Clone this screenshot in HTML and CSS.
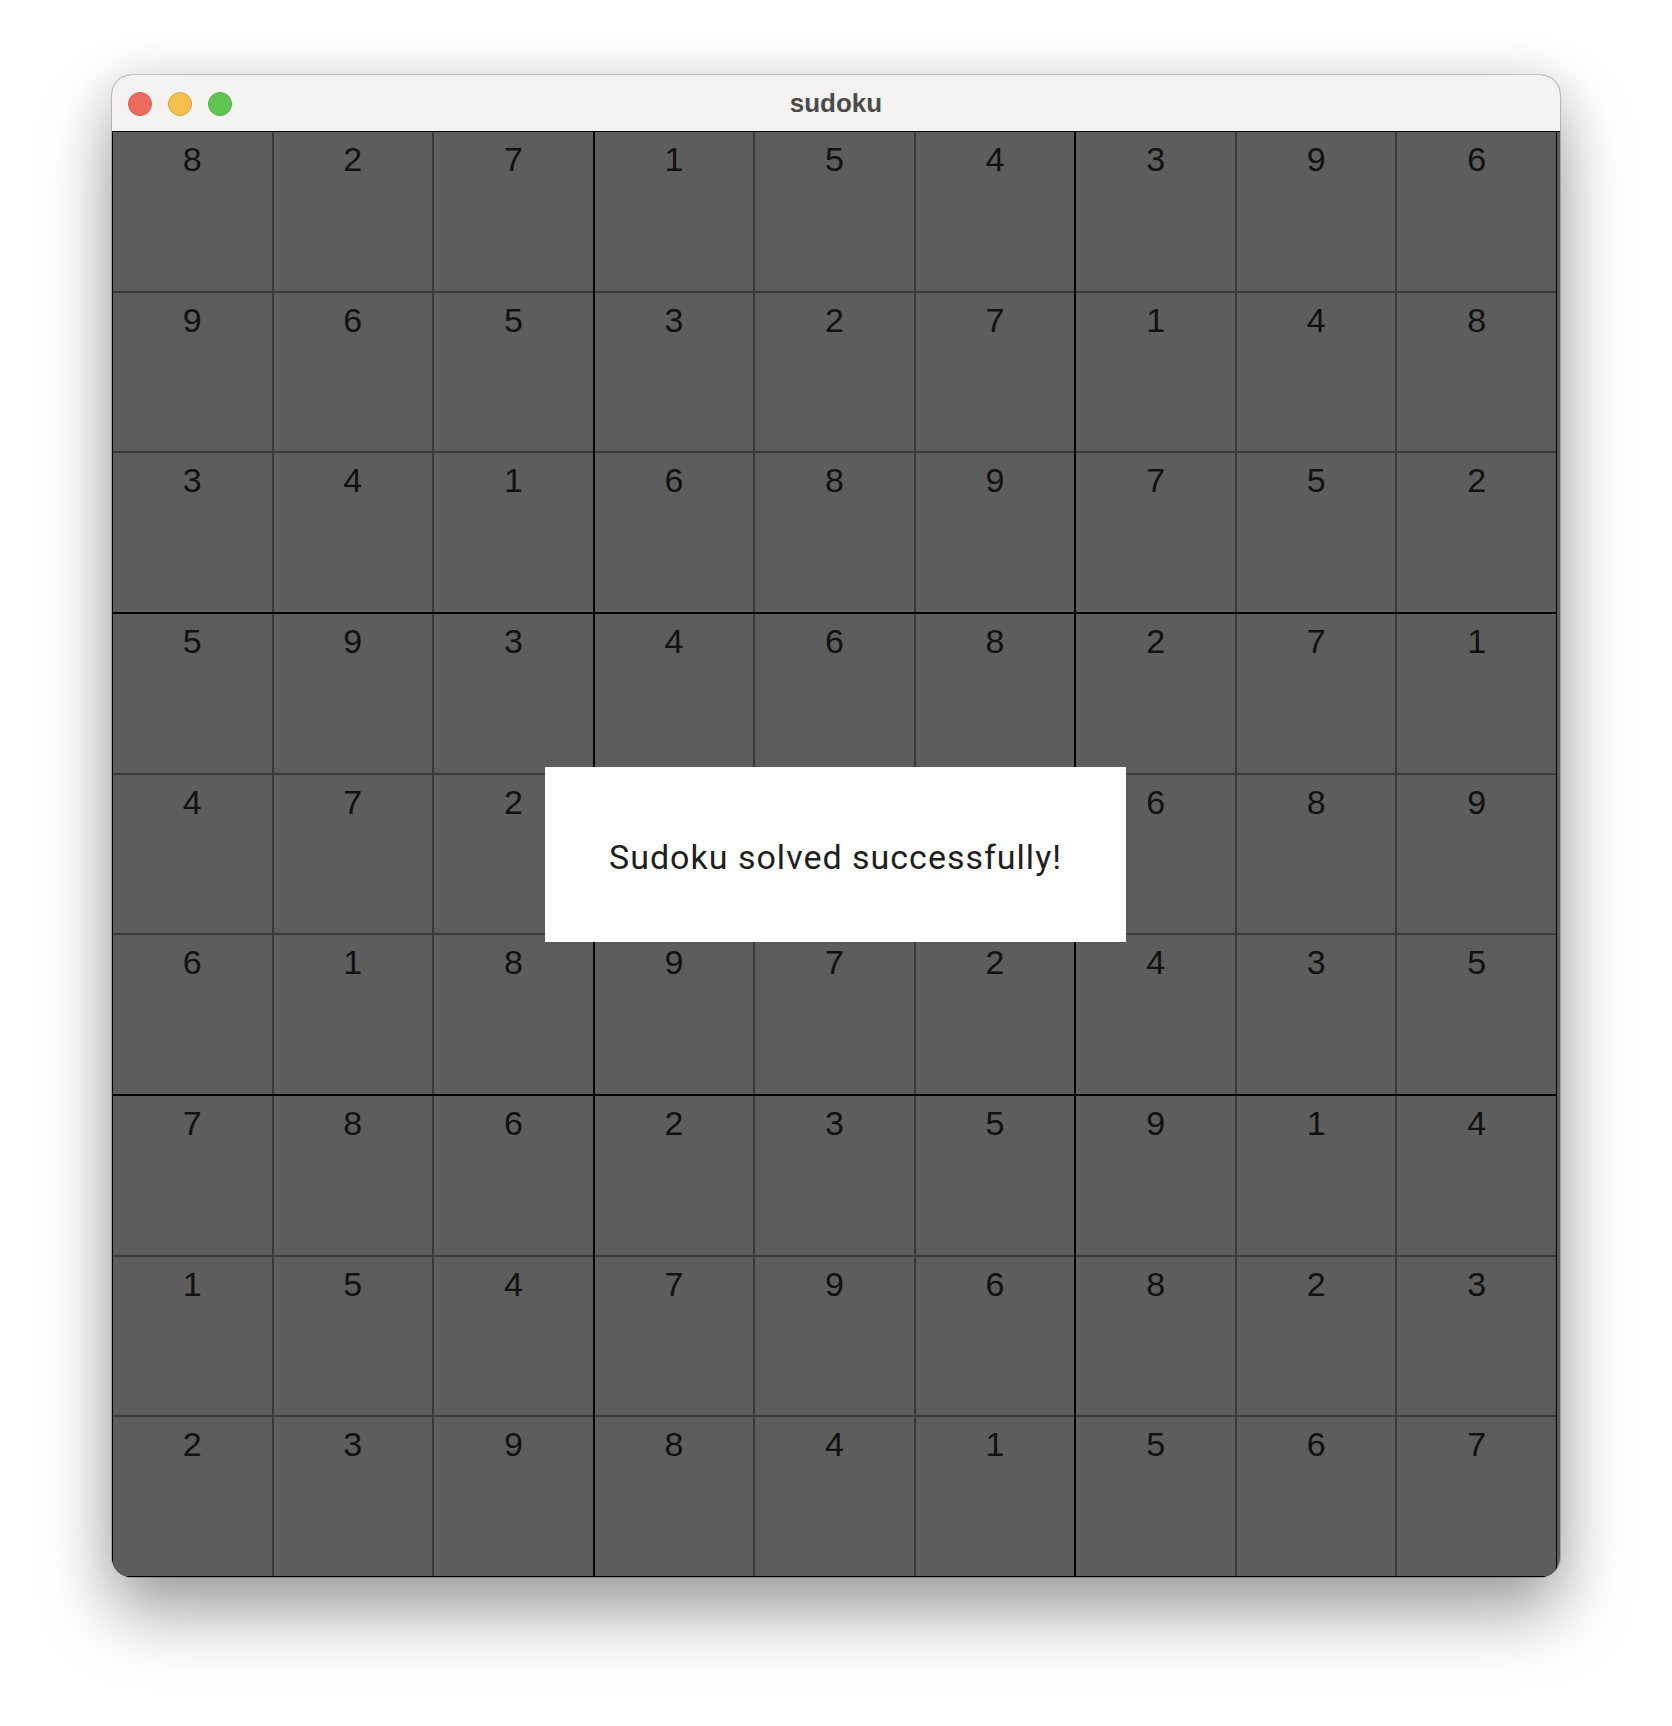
FILE: index.html
```html
<!DOCTYPE html>
<html lang="en">
<head>
  <meta charset="UTF-8">
  <title>sudoku</title>
  <link rel="stylesheet" href="styles.css">
</head>
<body>
  <div class="window">
    <!-- title bar -->
    <div class="titlebar">
      <div class="lights">
        <span class="light red"></span>
        <span class="light yellow"></span>
        <span class="light green"></span>
      </div>
      <div class="title">sudoku</div>
    </div>

    <!-- board -->
    <div class="content">
      <div class="board" id="board"></div>
      <div class="dialog">Sudoku solved successfully!</div>
    </div>
  </div>

  <script>
    const rows = [
      "827154396",
      "965327148",
      "341689752",
      "593468271",
      "472513689",
      "618972435",
      "786235914",
      "154796823",
      "239841567"
    ];

    const board = document.getElementById("board");

    // build the 3x3 boxes, each with its 3x3 cells
    for (let b = 0; b < 9; b++) {
      const box = document.createElement("div");
      box.className = "box";
      const r0 = Math.floor(b / 3) * 3;
      const c0 = (b % 3) * 3;
      for (let i = 0; i < 9; i++) {
        const cell = document.createElement("div");
        cell.className = "cell";
        cell.innerText = rows[r0 + Math.floor(i / 3)][c0 + (i % 3)];
        box.appendChild(cell);
      }
      board.appendChild(box);
    }
  </script>
</body>
</html>
```

FILE: styles.css
```css
html {
  background: #fff;
}
body {
  margin: 0;
  padding: 75px 0 0 112px;
  min-height: 1726px;
  box-sizing: border-box;
  background: #fff;
  font-family: "Liberation Sans", Arial, sans-serif;
}
.window {
  width: 1448px;
  height: 1502px;
  border-radius: 20px;
  overflow: hidden;
  background: #5d5d5d;
  box-shadow: 0 0 0 1px rgba(0,0,0,0.18), 0 36px 70px rgba(0,0,0,0.36), 0 0 50px rgba(0,0,0,0.10);
  display: flex;
  flex-direction: column;
}
.titlebar {
  height: 56px;
  flex: none;
  background: #f4f3f2;
  border-bottom: 1px solid #000;
  display: flex;
  align-items: center;
  justify-content: center;
  position: relative;
}
.lights {
  position: absolute;
  left: 16px;
  top: 17px;
  display: flex;
  gap: 16px;
}
.light {
  width: 24px;
  height: 24px;
  border-radius: 50%;
  box-sizing: border-box;
}
.red { background: #ed6a5e; border: 1px solid #d5564b; }
.yellow { background: #f5bf4f; border: 1px solid #d9a63c; }
.green { background: #61c554; border: 1px solid #4fad43; }
.title {
  font-size: 26px;
  font-weight: bold;
  color: #4b4b4b;
  margin-top: 1px;
}
.content {
  flex: 1;
  position: relative;
}
.board {
  width: 1445px;
  height: 1445px;
  box-sizing: border-box;
  border: 1px solid #000;
  border-top: none;
  background: #000;
  display: grid;
  grid-template-columns: repeat(3, 1fr);
  grid-template-rows: repeat(3, 1fr);
  gap: 2px;
}
.box {
  background: #3a3a3a;
  display: grid;
  grid-template-columns: repeat(3, 1fr);
  grid-template-rows: repeat(3, 1fr);
  gap: 2px;
}
.cell {
  background: #5d5d5d;
  color: #111;
  font-size: 34px;
  text-align: center;
  padding-top: 8px;
}
.dialog {
  position: absolute;
  left: 433px;
  top: 635px;
  width: 581px;
  height: 175px;
  background: #fff;
  display: flex;
  align-items: center;
  justify-content: center;
  font-family: Roboto, "Liberation Sans", sans-serif;
  font-size: 34px;
  letter-spacing: 1px;
  color: #1e1e1e;
  padding-top: 4px;
  box-sizing: border-box;
}
```
